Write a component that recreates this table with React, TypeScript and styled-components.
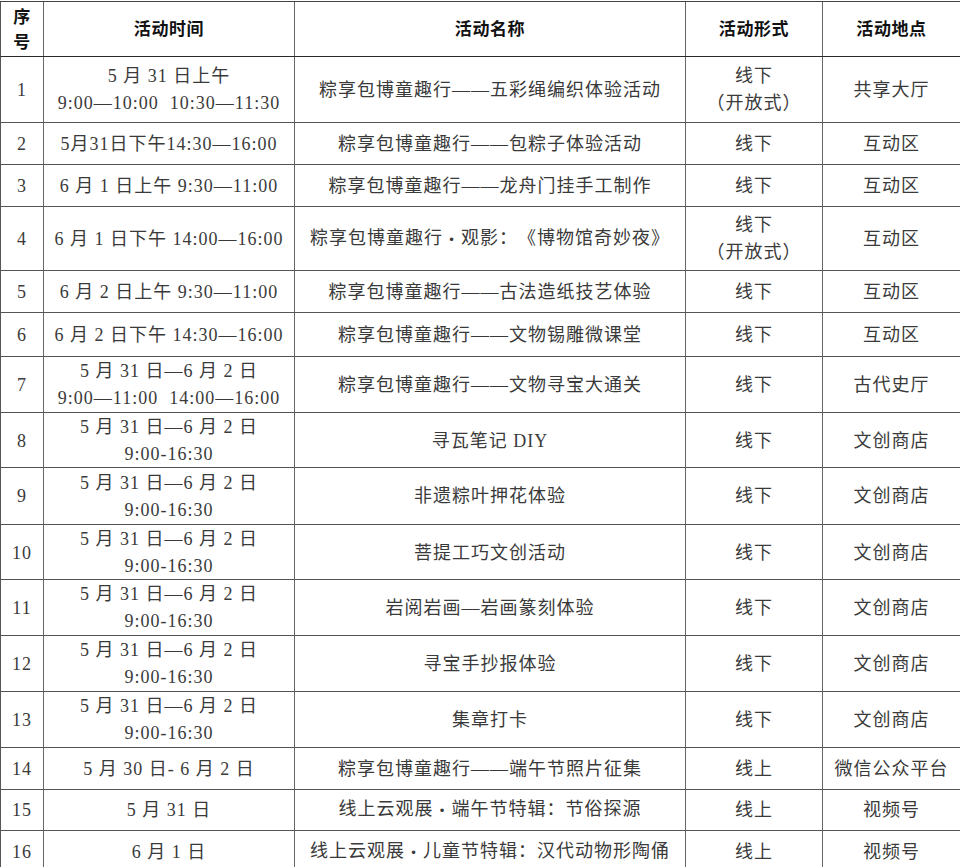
import React from "react";
import styled, { createGlobalStyle } from "styled-components";

const Global = createGlobalStyle`
  html, body { margin: 0; padding: 0; background: #fff; overflow: hidden; }
  body { font-family: "Liberation Serif", "Noto Sans CJK SC", serif; text-spacing-trim: space-all; }
`;

const Table = styled.div`
  margin-top: 1px;
  width: 1000px;
  border-top: 1px solid #444;
`;

const Row = styled.div<{ $h: number; $head?: boolean }>`
  display: grid;
  grid-template-columns: 43px 251px 391px 137px 137px;
  height: ${(p) => p.$h}px;
  box-sizing: border-box;
  border-left: 1px solid #555;
  border-bottom: 1px solid ${(p) => (p.$head ? "#2a2a2a" : "#555")};
  color: ${(p) => (p.$head ? "#111" : "#3a3a3a")};
  font-weight: ${(p) => (p.$head ? 700 : 400)};
  font-size: ${(p) => (p.$head ? "17px" : "18px")};
  letter-spacing: ${(p) => (p.$head ? "0.6px" : "1px")};
`;

const Cell = styled.div<{ $lh?: number; $last?: boolean }>`
  box-sizing: border-box;
  border-right: ${(p) => (p.$last ? "none" : "1px solid #666")};
  display: flex;
  flex-direction: column;
  align-items: center;
  justify-content: center;
  text-align: center;
  line-height: ${(p) => p.$lh ?? 27}px;
  white-space: nowrap;
  padding-top: 1px;
`;

const Dot = styled.span`
  font-family: "DejaVu Sans", sans-serif;
  font-size: 12px;
  margin: 0 5px;
`;

type R = { h: number; no: string; time: string[]; name: React.ReactNode; form: string[]; place: string };

const dotted = (a: string, b: string) => (
  <span>
    {a}
    <Dot>•</Dot>
    {b}
  </span>
);

const rows: R[] = [
  { h: 66, no: "1", time: ["5 月 31 日上午", "9:00—10:00  10:30—11:30"], name: "粽享包博童趣行——五彩绳编织体验活动", form: ["线下", "（开放式）"], place: "共享大厅" },
  { h: 42, no: "2", time: ["5月31日下午14:30—16:00"], name: "粽享包博童趣行——包粽子体验活动", form: ["线下"], place: "互动区" },
  { h: 42, no: "3", time: ["6 月 1 日上午 9:30—11:00"], name: "粽享包博童趣行——龙舟门挂手工制作", form: ["线下"], place: "互动区" },
  { h: 64, no: "4", time: ["6 月 1 日下午 14:00—16:00"], name: dotted("粽享包博童趣行", "观影：《博物馆奇妙夜》"), form: ["线下", "（开放式）"], place: "互动区" },
  { h: 42, no: "5", time: ["6 月 2 日上午 9:30—11:00"], name: "粽享包博童趣行——古法造纸技艺体验", form: ["线下"], place: "互动区" },
  { h: 44, no: "6", time: ["6 月 2 日下午 14:30—16:00"], name: "粽享包博童趣行——文物锡雕微课堂", form: ["线下"], place: "互动区" },
  { h: 56, no: "7", time: ["5 月 31 日—6 月 2 日", "9:00—11:00  14:00—16:00"], name: "粽享包博童趣行——文物寻宝大通关", form: ["线下"], place: "古代史厅" },
  { h: 55, no: "8", time: ["5 月 31 日—6 月 2 日", "9:00-16:30"], name: "寻瓦笔记 DIY", form: ["线下"], place: "文创商店" },
  { h: 57, no: "9", time: ["5 月 31 日—6 月 2 日", "9:00-16:30"], name: "非遗粽叶押花体验", form: ["线下"], place: "文创商店" },
  { h: 55, no: "10", time: ["5 月 31 日—6 月 2 日", "9:00-16:30"], name: "菩提工巧文创活动", form: ["线下"], place: "文创商店" },
  { h: 56, no: "11", time: ["5 月 31 日—6 月 2 日", "9:00-16:30"], name: "岩阅岩画—岩画篆刻体验", form: ["线下"], place: "文创商店" },
  { h: 56, no: "12", time: ["5 月 31 日—6 月 2 日", "9:00-16:30"], name: "寻宝手抄报体验", form: ["线下"], place: "文创商店" },
  { h: 56, no: "13", time: ["5 月 31 日—6 月 2 日", "9:00-16:30"], name: "集章打卡", form: ["线下"], place: "文创商店" },
  { h: 42, no: "14", time: ["5 月 30 日- 6 月 2 日"], name: "粽享包博童趣行——端午节照片征集", form: ["线上"], place: "微信公众平台" },
  { h: 41, no: "15", time: ["5 月 31 日"], name: dotted("线上云观展", "端午节特辑：节俗探源"), form: ["线上"], place: "视频号" },
  { h: 42, no: "16", time: ["6 月 1 日"], name: dotted("线上云观展", "儿童节特辑：汉代动物形陶俑"), form: ["线上"], place: "视频号" },
];

const Line = styled.span`
  display: block;
  white-space: pre;
`;

export default function App() {
  return (
    <>
      <Global />
      <Table>
        <Row $h={55} $head>
          <Cell $lh={25}>
            <Line>序</Line>
            <Line>号</Line>
          </Cell>
          <Cell>活动时间</Cell>
          <Cell>活动名称</Cell>
          <Cell>活动形式</Cell>
          <Cell $last>活动地点</Cell>
        </Row>
        {rows.map((r) => (
          <Row key={r.no} $h={r.h}>
            <Cell>{r.no}</Cell>
            <Cell>
              {r.time.map((t) => (
                <Line key={t}>{t}</Line>
              ))}
            </Cell>
            <Cell>{r.name}</Cell>
            <Cell>
              {r.form.map((t) => (
                <Line key={t}>{t}</Line>
              ))}
            </Cell>
            <Cell $last>{r.place}</Cell>
          </Row>
        ))}
      </Table>
    </>
  );
}
